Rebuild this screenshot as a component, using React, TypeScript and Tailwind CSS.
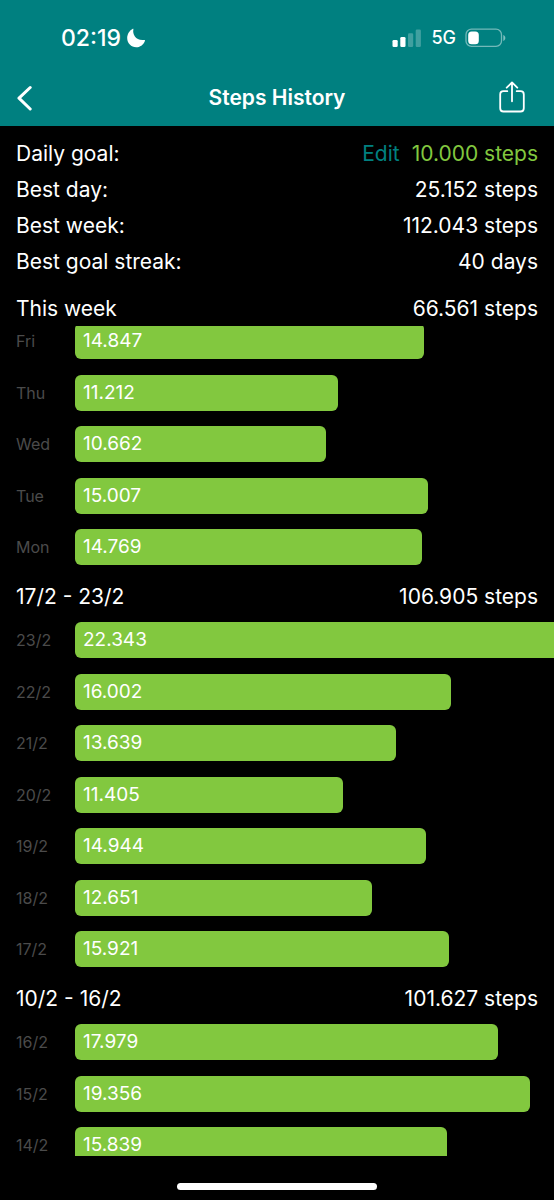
interface Day {
  label: string
  value: number
}

interface Week {
  title: string
  total: string
  days: Day[]
}

// number of steps that fills the whole width of the bar column
const FULL_WIDTH_STEPS = 20383

const currentWeek: Week = {
  title: 'This week',
  total: '66.561 steps',
  days: [
    { label: 'Fri', value: 14847 },
    { label: 'Thu', value: 11212 },
    { label: 'Wed', value: 10662 },
    { label: 'Tue', value: 15007 },
    { label: 'Mon', value: 14769 },
  ],
}

const pastWeeks: Week[] = [
  {
    title: '17/2 - 23/2',
    total: '106.905 steps',
    days: [
      { label: '23/2', value: 22343 },
      { label: '22/2', value: 16002 },
      { label: '21/2', value: 13639 },
      { label: '20/2', value: 11405 },
      { label: '19/2', value: 14944 },
      { label: '18/2', value: 12651 },
      { label: '17/2', value: 15921 },
    ],
  },
  {
    title: '10/2 - 16/2',
    total: '101.627 steps',
    days: [
      { label: '16/2', value: 17979 },
      { label: '15/2', value: 19356 },
      { label: '14/2', value: 15839 },
    ],
  },
]

function formatSteps(value: number): string {
  return String(value).replace(/\B(?=(\d{3})+$)/g, '.')
}

function StatusBar() {
  return (
    <div className="flex h-[76px] items-center justify-between pr-12 pl-[61px]">
      <div className="flex items-center gap-[5px]">
        <span className="text-[23px] leading-8 font-medium">02:19</span>
        <svg width="20" height="20" viewBox="0 0 20 20" fill="currentColor" aria-hidden="true">
          <path d="M7.4 1.3C6.2 6.8 10.2 13 18.2 11.9C18.9 11.8 19.2 12.3 18.9 12.9C17.3 16.9 14 19.2 10.2 19.2C5.2 19.2 1.2 15.3 1.2 10.3C1.2 6.3 3.3 2.7 6.5 1C7.1 .7 7.5 .9 7.4 1.3Z" />
        </svg>
      </div>
      <div className="flex items-center gap-[9px]">
        <svg width="30" height="19" viewBox="0 0 30 19" fill="currentColor" aria-hidden="true">
          <rect x="0.5" y="11" width="5.2" height="7" rx="1.3" />
          <rect x="8.3" y="8" width="5.2" height="10" rx="1.3" />
          <rect x="16" y="4.3" width="5.2" height="13.7" rx="1.3" opacity="0.25" />
          <rect x="23.7" y="0.5" width="5.2" height="17.5" rx="1.3" opacity="0.25" />
        </svg>
        <span className="text-lg leading-8 font-medium">5G</span>
        <svg width="41" height="20" viewBox="0 0 41 20" fill="currentColor" aria-hidden="true">
          <rect x="1" y="1.2" width="35.5" height="17.2" rx="5.5" fill="none" stroke="currentColor" strokeWidth="1.3" opacity="0.45" />
          <path d="M38.3 7V13C39.6 12.5 40.3 11.4 40.3 10S39.6 7.5 38.3 7Z" opacity="0.5" />
          <rect x="3.2" y="3.4" width="10.6" height="12.8" rx="3.5" />
        </svg>
      </div>
    </div>
  )
}

function NavBar() {
  return (
    <div className="grid h-[50px] grid-cols-[1fr_auto_1fr] items-center px-4 pb-1.5">
      <button type="button" aria-label="Back" className="justify-self-start">
        <svg width="18" height="26" viewBox="0 0 18 26" fill="none" stroke="currentColor" strokeWidth="3" strokeLinecap="round" strokeLinejoin="round" aria-hidden="true">
          <path d="M14.2 2.5L3 13.2L14.2 24" />
        </svg>
      </button>
      <h1 className="text-[21px] leading-8 font-semibold">Steps History</h1>
      <button type="button" aria-label="Share" className="mr-3 justify-self-end">
        <svg width="28" height="34" viewBox="0 0 28 34" fill="none" stroke="currentColor" strokeWidth="1.8" strokeLinecap="round" strokeLinejoin="round" aria-hidden="true">
          <path d="M9.3 10.2H5.5Q2.2 10.2 2.2 13.5V27.2Q2.2 30.5 5.5 30.5H22.5Q25.8 30.5 25.8 27.2V13.5Q25.8 10.2 22.5 10.2H18.7" />
          <path d="M14 20.3V1.5M8.7 6.7L14 1.4L19.3 6.7" />
        </svg>
      </button>
    </div>
  )
}

function Stats() {
  return (
    <dl className="px-4 pt-2.5 text-[21px] leading-9">
      <div className="flex justify-between">
        <dt>Daily goal:</dt>
        <dd className="flex gap-3 text-[#82c83f]">
          <button type="button" className="text-[#008080]">
            Edit
          </button>
          10.000 steps
        </dd>
      </div>
      <div className="flex justify-between">
        <dt>Best day:</dt>
        <dd>25.152 steps</dd>
      </div>
      <div className="flex justify-between">
        <dt>Best week:</dt>
        <dd>112.043 steps</dd>
      </div>
      <div className="flex justify-between">
        <dt>Best goal streak:</dt>
        <dd>40 days</dd>
      </div>
    </dl>
  )
}

function WeekHeader({ title, total }: { title: string; total: string }) {
  return (
    <div className="flex justify-between px-4 text-[21px] leading-8">
      <h2>{title}</h2>
      <span>{total}</span>
    </div>
  )
}

function DayList({ days }: { days: Day[] }) {
  return (
    <ul>
      {days.map((day) => (
        <li key={day.label} className="flex pb-4 pl-4 even:pb-[15px]">
          <span className="w-[59px] shrink-0 text-base leading-9 text-[#4b4b4b]">{day.label}</span>
          <div className="min-w-0 flex-1">
            <div
              className="h-9 rounded-md bg-[#82c83f] pl-2 text-[19px] leading-9"
              style={{ width: `${(day.value / FULL_WIDTH_STEPS) * 100}%` }}
            >
              {formatSteps(day.value)}
            </div>
          </div>
        </li>
      ))}
    </ul>
  )
}

export default function App() {
  return (
    <div className="flex h-screen flex-col overflow-hidden bg-black font-['Inter',sans-serif] text-white">
      <header className="shrink-0 bg-[#008080]">
        <StatusBar />
        <NavBar />
      </header>
      <main className="min-h-0 flex-1 overflow-hidden">
        <Stats />
        <section>
          <div className="pt-[13px] pb-px">
            <WeekHeader title={currentWeek.title} total={currentWeek.total} />
          </div>
          {/* list is scrolled slightly under its header */}
          <div className="overflow-hidden">
            <div className="-mt-[3px]">
              <DayList days={currentWeek.days} />
            </div>
          </div>
        </section>
        {pastWeeks.map((week) => (
          <section key={week.title}>
            <div className="pb-[9px]">
              <WeekHeader title={week.title} total={week.total} />
            </div>
            <DayList days={week.days} />
          </section>
        ))}
      </main>
      <footer className="flex h-11 shrink-0 items-end justify-center pb-[10px]">
        <div className="h-[7px] w-[36%] rounded-full bg-white" />
      </footer>
    </div>
  )
}
